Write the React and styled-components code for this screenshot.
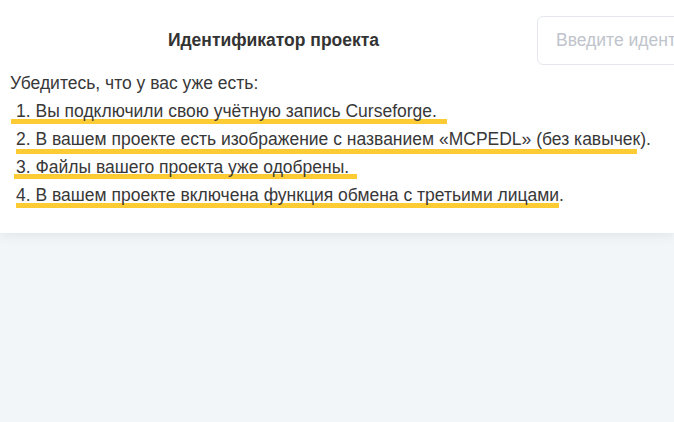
import React from 'react'
import styled, { createGlobalStyle } from 'styled-components'

const GlobalStyle = createGlobalStyle`
  html, body {
    margin: 0;
    padding: 0;
    background: #f3f6f9;
    font-family: "Liberation Sans", Arial, sans-serif;
  }
`

const Page = styled.div`
  min-height: 422px;
  background: #f3f6f9;
`

const Card = styled.div`
  background: #fff;
  box-shadow: 0 2px 12px rgba(0, 0, 0, 0.08);
  padding: 16px 0 24px 10px;
  overflow: hidden;
`

const FormRow = styled.div`
  display: grid;
  grid-template-columns: 527px 300px;
  align-items: center;
`

const Label = styled.div`
  text-align: center;
  font-size: 17.5px;
  font-weight: 700;
  color: #333;
`

const Input = styled.input`
  box-sizing: border-box;
  height: 49px;
  width: 300px;
  border: 1px solid #e4e7ed;
  border-radius: 6px;
  padding: 0 18px;
  font-family: inherit;
  font-size: 17.5px;
  color: #333;
  outline: none;
  &::placeholder {
    color: #c0c4cc;
  }
`

const Intro = styled.div`
  margin-top: 4px;
  font-size: 17.5px;
  line-height: 28px;
  color: #383838;
`

const List = styled.div`
  display: flex;
  flex-direction: column;
`

const Item = styled.div`
  position: relative;
  padding-left: 6px;
  font-size: 17.5px;
  line-height: 28px;
  color: #383838;
  white-space: nowrap;
`

const Text = styled.span`
  position: relative;
  z-index: 1;
`

const Highlight = styled.span`
  position: absolute;
  left: ${p => p.$left}px;
  top: ${p => p.$top}px;
  width: ${p => p.$width}px;
  height: 5px;
  background: #fdcb33;
`

const items = [
  { text: '1. Вы подключили свою учётную запись Curseforge.', left: 1, top: 22, width: 436 },
  { text: '2. В вашем проекте есть изображение с названием «MCPEDL» (без кавычек).', left: 6, top: 24, width: 621 },
  { text: '3. Файлы вашего проекта уже одобрены.', left: 4, top: 21, width: 343 },
  { text: '4. В вашем проекте включена функция обмена с третьими лицами.', left: 6, top: 22, width: 543 },
]

export default function App() {
  return (
    <Page>
      <GlobalStyle />
      <Card>
        <FormRow>
          <Label>Идентификатор проекта</Label>
          <Input placeholder="Введите идентификатор проекта" />
        </FormRow>
        <Intro>Убедитесь, что у вас уже есть:</Intro>
        <List>
          {items.map(it => (
            <Item key={it.text}>
              <Highlight $left={it.left} $top={it.top} $width={it.width} />
              <Text>{it.text}</Text>
            </Item>
          ))}
        </List>
      </Card>
    </Page>
  )
}
